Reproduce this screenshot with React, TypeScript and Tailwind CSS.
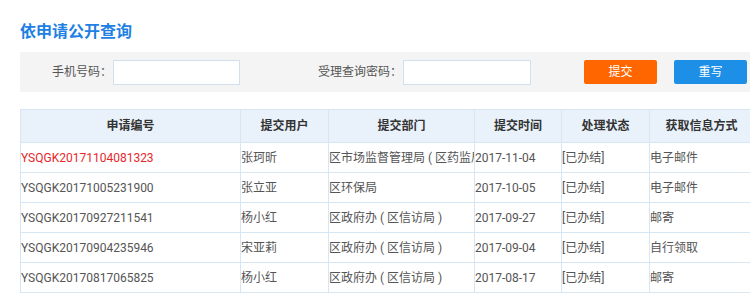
import React from 'react';

const ROWS = [
  { no: 'YSQGK20171104081323', user: '张珂昕', dept: '区市场监督管理局 ( 区药监局 )', time: '2017-11-04', status: '[已办结]', way: '电子邮件', hot: true },
  { no: 'YSQGK20171005231900', user: '张立亚', dept: '区环保局', time: '2017-10-05', status: '[已办结]', way: '电子邮件' },
  { no: 'YSQGK20170927211541', user: '杨小红', dept: '区政府办 ( 区信访局 )', time: '2017-09-27', status: '[已办结]', way: '邮寄' },
  { no: 'YSQGK20170904235946', user: '宋亚莉', dept: '区政府办 ( 区信访局 )', time: '2017-09-04', status: '[已办结]', way: '自行领取' },
  { no: 'YSQGK20170817065825', user: '杨小红', dept: '区政府办 ( 区信访局 )', time: '2017-08-17', status: '[已办结]', way: '邮寄' },
];

const HEADS = [
  { label: '申请编号', w: 'w-[220px]' },
  { label: '提交用户', w: 'w-[88px]' },
  { label: '提交部门', w: 'w-[146px]' },
  { label: '提交时间', w: 'w-[87px]' },
  { label: '处理状态', w: 'w-[88px]' },
  { label: '获取信息方式', w: 'w-[104px]' },
];

export default function App() {
  return (
    <div className="w-[750px] h-[293px] overflow-hidden bg-white font-['Roboto','Noto_Sans_CJK_SC',sans-serif] text-[12px] text-[#555]">
      <div className="w-[733px] ml-[20px] pt-[20px]">
        <h1 className="h-[24px] leading-[24px] text-[16px] font-bold text-[#1d80e2]">依申请公开查询</h1>

        {/* 查询条件 */}
        <div className="mt-[8px] h-[40px] bg-[#f4f4f4] flex items-center">
          <label className="w-[93px] text-right text-[#555] pr-[1px]">手机号码：</label>
          <input className="w-[127px] h-[25px] bg-white border border-[#cfe0f1] outline-none" />
          <label className="ml-[70px] w-[93px] text-right text-[#555] pr-[1px]">受理查询密码：</label>
          <input className="w-[128px] h-[25px] bg-white border border-[#cfe0f1] outline-none" />
          <button className="ml-[53px] w-[73px] h-[24px] rounded-[2px] bg-[#ff6600] text-white text-[12px]">提交</button>
          <button className="ml-[17px] w-[73px] h-[24px] rounded-[2px] bg-[#1e8fe6] text-white text-[12px]">重写</button>
        </div>

        {/* 结果列表 */}
        <table className="mt-[17px] w-[733px] table-fixed border-collapse">
          <thead>
            <tr className="bg-[#e9f2fb]">
              {HEADS.map((h) => (
                <th key={h.label} className={`${h.w} h-[33px] border border-[#d6e6f4] text-center font-bold text-[#333] text-[12px]`}>
                  {h.label}
                </th>
              ))}
            </tr>
          </thead>
          <tbody>
            {ROWS.map((r) => (
              <tr key={r.no} className="h-[30px]">
                <td className={`border border-[#d6e6f4] whitespace-nowrap overflow-hidden ${r.hot ? 'text-[#e8262b]' : ''}`}>{r.no}</td>
                <td className="border border-[#d6e6f4] whitespace-nowrap overflow-hidden">{r.user}</td>
                <td className="border border-[#d6e6f4] whitespace-nowrap overflow-hidden">{r.dept}</td>
                <td className="border border-[#d6e6f4] whitespace-nowrap overflow-hidden">{r.time}</td>
                <td className="border border-[#d6e6f4] whitespace-nowrap overflow-hidden">{r.status}</td>
                <td className="border border-[#d6e6f4] whitespace-nowrap overflow-hidden">{r.way}</td>
              </tr>
            ))}
          </tbody>
        </table>
      </div>
    </div>
  );
}
